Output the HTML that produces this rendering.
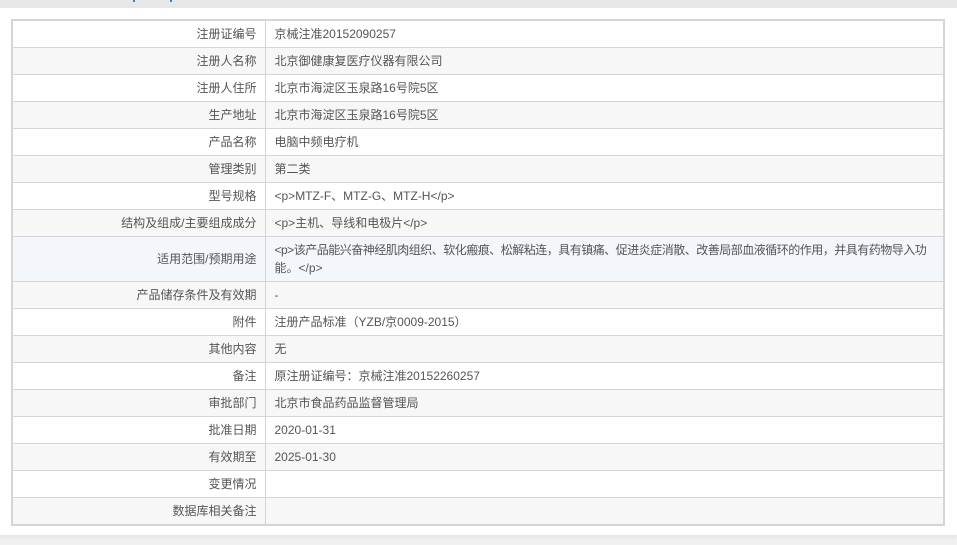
<!DOCTYPE html>
<html><head><meta charset="utf-8"><style>
body{margin:0;background:#f0f0f0;width:957px;height:545px;overflow:hidden;font-family:"Liberation Sans","Noto Sans CJK SC",sans-serif;font-size:12px;color:#555}
.top{height:8px;background:#e8e8e8;position:relative}
.top i{position:absolute;top:0;width:2px;height:2px;background:#1e88e5}
.panel{position:absolute;top:8px;left:0;width:957px;height:527px;background:#fff;box-shadow:0 2px 4px rgba(0,0,0,.06)}
table{position:absolute;left:11px;top:11px;width:934px;border-collapse:collapse;border:2px solid #d5d5d5;table-layout:fixed}
td{border:1px solid #d5d5d5;height:26px;padding:0 9px;line-height:18px;vertical-align:middle;white-space:nowrap;overflow:hidden}
td.l{text-align:right;padding:0 8px}
tr:nth-child(even) td{background:#f7f7f7}
tr.h td{background:#f3f6fb;height:44px}
.n{letter-spacing:-0.5px}
</style></head><body>
<div class="top"><i style="left:133px"></i><i style="left:170px"></i></div>
<div class="panel">
<table>
<colgroup><col style="width:253px"><col></colgroup>
<tr><td class="l">注册证编号</td><td>京械注准20152090257</td></tr>
<tr><td class="l">注册人名称</td><td>北京御健康复医疗仪器有限公司</td></tr>
<tr><td class="l">注册人住所</td><td>北京市海淀区玉泉路16号院5区</td></tr>
<tr><td class="l">生产地址</td><td>北京市海淀区玉泉路16号院5区</td></tr>
<tr><td class="l">产品名称</td><td>电脑中频电疗机</td></tr>
<tr><td class="l">管理类别</td><td>第二类</td></tr>
<tr><td class="l">型号规格</td><td>&lt;p&gt;MTZ-F、MTZ-G、MTZ-H&lt;/p&gt;</td></tr>
<tr><td class="l">结构及组成/主要组成成分</td><td>&lt;p&gt;主机、导线和电极片&lt;/p&gt;</td></tr>
<tr class="h"><td class="l">适用范围/预期用途</td><td><span class="n">&lt;p&gt;该产品能兴奋神经肌肉组织、软化瘢痕、松解粘连，具有镇痛、促进炎症消散、改善局部血液循环的作用，并具有药物导入功</span><br>能。&lt;/p&gt;</td></tr>
<tr><td class="l">产品储存条件及有效期</td><td>-</td></tr>
<tr><td class="l">附件</td><td>注册产品标准（YZB/京0009-2015）</td></tr>
<tr><td class="l">其他内容</td><td>无</td></tr>
<tr><td class="l">备注</td><td>原注册证编号：京械注准20152260257</td></tr>
<tr><td class="l">审批部门</td><td>北京市食品药品监督管理局</td></tr>
<tr><td class="l">批准日期</td><td>2020-01-31</td></tr>
<tr><td class="l">有效期至</td><td>2025-01-30</td></tr>
<tr><td class="l">变更情况</td><td></td></tr>
<tr><td class="l">数据库相关备注</td><td></td></tr>
</table>
</div>
</body></html>
